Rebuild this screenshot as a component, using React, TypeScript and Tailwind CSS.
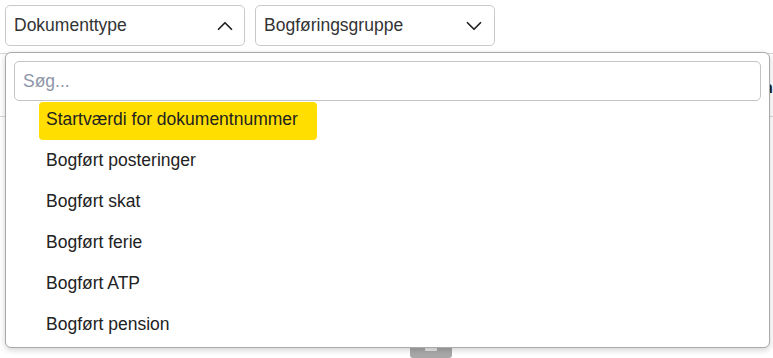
import React, { useState } from 'react';
import { ChevronUp, ChevronDown } from 'lucide-react';

const options = [
  'Startværdi for dokumentnummer',
  'Bogført posteringer',
  'Bogført skat',
  'Bogført ferie',
  'Bogført ATP',
  'Bogført pension',
];

export default function App() {
  const [active, setActive] = useState(0);
  const [query, setQuery] = useState('');

  return (
    <div className="relative w-[773px] h-[358px] bg-white overflow-hidden font-['Liberation_Sans',Arial,sans-serif] text-[#222]">
      {/* filters */}
      <div className="flex gap-[10px] pl-[5px] pt-[5px]">
        <button className="flex items-center justify-between w-[240px] h-[41px] pl-[8px] pr-[6px] border border-[#c9c9c9] rounded-[5px] bg-white text-[17.5px] text-[#333]">
          <span>Dokumenttype</span>
          <ChevronUp size={26} className="text-[#222]" strokeWidth={1.6} />
        </button>
        <button className="flex items-center justify-between w-[240px] h-[41px] pl-[8px] pr-[7px] border border-[#c9c9c9] rounded-[5px] bg-white text-[17.5px] text-[#333]">
          <span>Bogføringsgruppe</span>
          <ChevronDown size={26} className="text-[#222]" strokeWidth={1.6} />
        </button>
      </div>

      {/* table header behind */}
      <div className="mt-[7px] h-[64px] border-t border-b border-[#d6d6d6] flex items-center justify-end">
        <span className="font-bold text-[17px] whitespace-nowrap pt-[6px]">n</span>
      </div>

      {/* bottom handle behind */}
      <div className="absolute left-[410px] top-[344px] w-[42px] h-[14px] bg-[#a8a8a8] rounded-[3px] flex justify-center">
        <div className="mt-[3px] w-[12px] h-[4px] bg-[#e8e8e8] rounded-[1px]" />
      </div>

      {/* dropdown */}
      <div className="absolute left-[5px] top-[52px] w-[765px] h-[296px] bg-white border border-[#a9a9a9] rounded-[6px] shadow-[0_2px_6px_rgba(0,0,0,0.18)] px-[8px] pt-[8px]">
        <input
          value={query}
          onChange={(e) => setQuery(e.target.value)}
          placeholder="Søg..."
          className="w-[747px] h-[40px] px-[8px] border border-[#c4c4c4] rounded-[5px] text-[17.5px] text-[#333] placeholder:text-[#8d96a8] outline-none"
        />
        <ul className="ml-[25px] mt-[1px]">
          {options
            .filter((o) => o.toLowerCase().includes(query.toLowerCase()))
            .map((o, i) => (
              <li
                key={o}
                onMouseEnter={() => setActive(i)}
                className={
                  'w-[278px] h-[38px] mb-[3px] pl-[7px] pt-[5px] text-[17.5px] leading-[24px] whitespace-nowrap rounded-[4px] cursor-pointer ' +
                  (i === active ? 'bg-[#ffde00]' : '')
                }
              >
                {o}
              </li>
            ))}
        </ul>
      </div>
    </div>
  );
}
